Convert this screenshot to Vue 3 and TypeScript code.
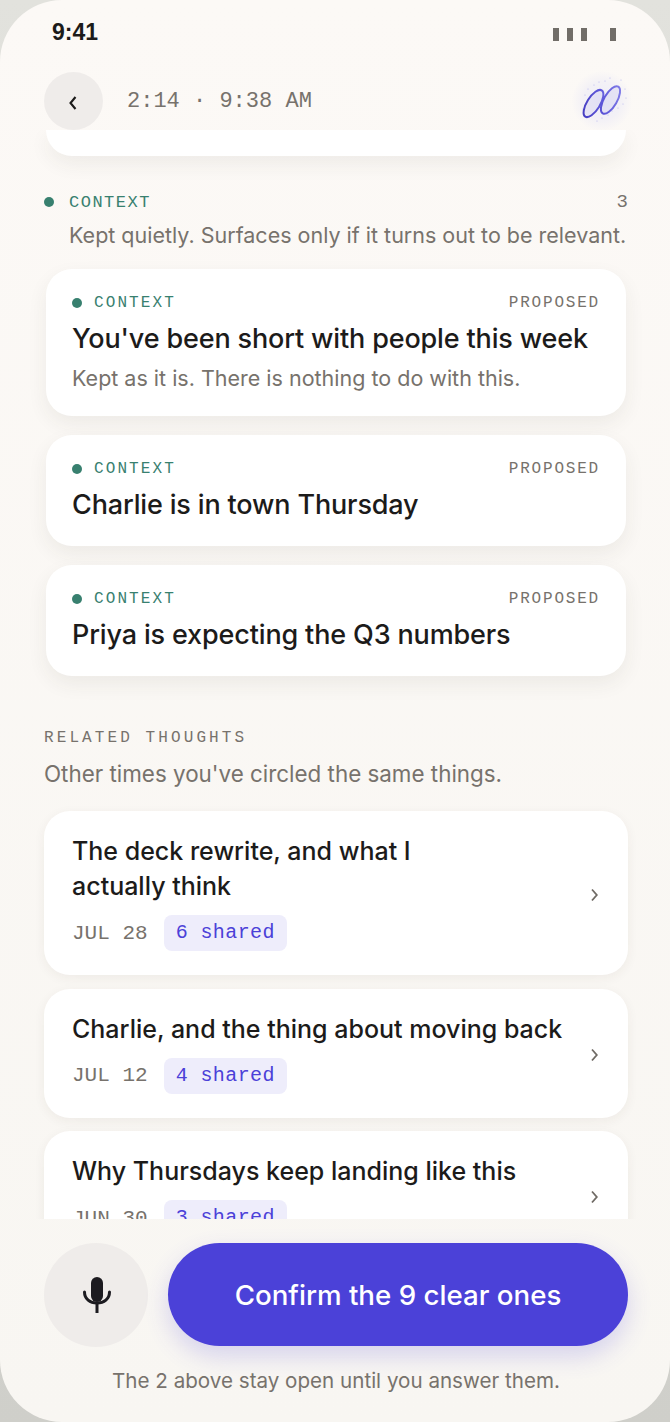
<template>
  <div class="phone">
    <div class="status">
      <span class="clock">9:41</span>
      <span class="signal"><i></i><i></i><i></i><i class="last"></i></span>
    </div>

    <header class="topbar">
      <button class="back" aria-label="Back">
        <svg width="12" height="16" viewBox="0 0 12 16"><path d="M8.500 2 3.500 8l5 6" fill="none" stroke="#1c1b1a" stroke-width="2.100" /></svg>
      </button>
      <span class="when">2:14 · 9:38 AM</span>
      <span class="mark">
        <svg width="60" height="60" viewBox="0 0 60 60">
          <defs>
            <linearGradient id="loop" gradientUnits="userSpaceOnUse" x1="12" y1="46" x2="48" y2="14">
              <stop offset="0" stop-color="#4239bd" />
              <stop offset="0.5" stop-color="#5f58da" />
              <stop offset="1" stop-color="#8985ea" />
            </linearGradient>
          </defs>
          <g fill="#b9b6ee">
            <circle v-for="d in sparkles" :key="d[0] + '-' + d[1]" :cx="d[0]" :cy="d[1]" r="0.6" />
          </g>
          <ellipse cx="21.500" cy="32.500" rx="6.500" ry="15.500" transform="rotate(32 21.500 32.500)" fill="rgba(120,115,230,0.1)" stroke="url(#loop)" stroke-width="2" />
          <ellipse cx="38.500" cy="29" rx="6.500" ry="15.500" transform="rotate(30 38.500 29)" fill="rgba(120,115,230,0.1)" stroke="url(#loop)" stroke-width="2" />
        </svg>
      </span>
    </header>

    <main class="scroller">
      <div class="stub"></div>

      <section class="context">
        <div class="section-head">
          <span class="dot"></span>
          <span class="section-label">CONTEXT</span>
          <span class="count">3</span>
        </div>
        <p class="section-desc">Kept quietly. Surfaces only if it turns out to be relevant.</p>

        <div class="context-list">
          <article v-for="item in contextItems" :key="item.title" class="card">
            <div class="card-head">
              <span class="dot small"></span>
              <span class="card-label">CONTEXT</span>
              <span class="state">PROPOSED</span>
            </div>
            <h3 class="card-title">{{ item.title }}</h3>
            <p v-if="item.note" class="card-note">{{ item.note }}</p>
          </article>
        </div>
      </section>

      <section class="related">
        <h2 class="related-label">RELATED THOUGHTS</h2>
        <p class="related-desc">Other times you've circled the same things.</p>

        <div class="thought-list">
          <article v-for="t in thoughts" :key="t.date" class="thought">
            <div class="thought-body">
              <h3 class="thought-title">{{ t.title }}</h3>
              <div class="thought-meta">
                <span class="date">{{ t.date }}</span>
                <span class="tag">{{ t.shared }} shared</span>
              </div>
            </div>
            <svg class="chev" width="10" height="16" viewBox="0 0 10 16"><path d="M2 2.500 6.800 8 2 13.500" fill="none" stroke="#6f6a64" stroke-width="1.800" /></svg>
          </article>
        </div>
      </section>
    </main>

    <footer class="actions">
      <div class="action-row">
        <button class="mic" aria-label="Record">
          <svg width="32" height="38" viewBox="0 0 32 38">
            <rect x="11" y="1" width="12" height="25" rx="6" fill="#1c1b20" />
            <path d="M4.500 16C4.500 23 10 27 17 27s12.500-4 12.500-11" fill="none" stroke="#1c1b20" stroke-width="3" stroke-linecap="round" />
            <path d="M17 27v10" stroke="#1c1b20" stroke-width="3" />
          </svg>
        </button>
        <button class="confirm">Confirm the 9 clear ones</button>
      </div>
      <p class="hint">The 2 above stay open until you answer them.</p>
    </footer>
  </div>
</template>

<script setup lang="ts">
const contextItems = [
  { title: "You've been short with people this week", note: 'Kept as it is. There is nothing to do with this.' },
  { title: 'Charlie is in town Thursday' },
  { title: 'Priya is expecting the Q3 numbers' },
]

const thoughts = [
  { title: 'The deck rewrite, and what I\nactually think', date: 'JUL 28', shared: 6 },
  { title: 'Charlie, and the thing about moving back', date: 'JUL 12', shared: 4 },
  { title: 'Why Thursdays keep landing like this', date: 'JUN 30', shared: 3 },
]

// little specks round the logo
const sparkles: number[][] = [
  [13, 24], [16, 18], [22, 14], [27, 11], [33, 10], [38, 7], [49, 9], [53, 18],
  [54, 27], [51, 33], [46, 37], [40, 40], [36, 44], [30, 47], [25, 50], [11, 38],
]
</script>

<style>
html, body {
  margin: 0;
  background: linear-gradient(#e2e2dd, #cfcfca);
}
</style>

<style scoped>
.phone {
  width: 670px;
  height: 1422px;
  border-radius: 62px;
  overflow: hidden;
  background: linear-gradient(#fcf9f6, #f8f6f2);
  display: flex;
  flex-direction: column;
  font-family: Inter, "Liberation Sans", sans-serif;
  color: #1c1b1a;
}
.status {
  height: 72px;
  flex: none;
  box-sizing: border-box;
  padding: 18px 52px 0;
  display: flex;
  justify-content: space-between;
  align-items: flex-start;
}
.clock {
  font-family: "Liberation Sans", sans-serif;
  font-weight: 700;
  font-size: 23px;
  line-height: 28px;
}
.signal {
  display: flex;
  gap: 8px;
  margin: 10px 2px 0 0;
}
.signal i {
  width: 6px;
  height: 13px;
  background: #716d68;
}
.signal i.last {
  margin-left: 15px;
}
.topbar {
  height: 58px;
  flex: none;
  padding: 0 38px 0 44px;
  display: flex;
  align-items: center;
}
.back {
  width: 59px;
  height: 58px;
  border: 0;
  padding: 3px 1px 0 0;
  border-radius: 50%;
  background: #efecea;
  display: flex;
  align-items: center;
  justify-content: center;
}
.when {
  margin-left: 24px;
  font-family: "Liberation Mono", monospace;
  font-size: 22px;
  color: #77726c;
}
.mark {
  margin-left: auto;
  width: 60px;
  height: 60px;
  border-radius: 50%;
  background: radial-gradient(circle, #eeedf8 0, #f3f1f6 45%, rgba(251, 248, 245, 0) 72%);
}
.mark svg {
  display: block;
}
.scroller {
  flex: 1;
  min-height: 0;
  overflow: hidden;
}
.stub {
  height: 26px;
  margin: 0 44px 0 46px;
  background: #fff;
  border-radius: 0 0 26px 26px;
  box-shadow: 0 8px 20px rgba(60, 50, 40, 0.07);
}
.context {
  padding: 36px 42px 0 44px;
}
.section-head {
  display: flex;
  align-items: center;
  height: 20px;
}
.dot {
  width: 10px;
  height: 10px;
  border-radius: 50%;
  background: #38806f;
  flex: none;
}
.section-label {
  margin-left: 15px;
  font-family: "Liberation Mono", monospace;
  font-size: 17px;
  letter-spacing: 1.500px;
  color: #38806f;
}
.count {
  margin-left: auto;
  font-family: "Liberation Mono", monospace;
  font-size: 19px;
  color: #77726c;
}
.section-desc {
  margin: 9px 0 0 25px;
  font-size: 21.500px;
  line-height: 28px;
  white-space: nowrap;
  color: #77726c;
}
.context-list {
  margin: 20px 2px 0 2px;
  display: flex;
  flex-direction: column;
  gap: 19px;
}
.card {
  box-sizing: border-box;
  background: #fff;
  border-radius: 26px;
  padding: 24px 26px 21px;
  box-shadow: 0 8px 20px rgba(60, 50, 40, 0.07);
}
.card-head {
  display: flex;
  align-items: center;
  height: 20px;
}
.card-label {
  margin-left: 12px;
  font-family: "Liberation Mono", monospace;
  font-size: 16px;
  letter-spacing: 2.100px;
  color: #38806f;
}
.state {
  margin-left: auto;
  font-family: "Liberation Mono", monospace;
  font-size: 16px;
  letter-spacing: 1.800px;
  color: #77726c;
}
.card-title {
  margin: 6px 0 0;
  font-size: 27px;
  letter-spacing: -0.150px;
  line-height: 40px;
  font-weight: 500;
  white-space: nowrap;
}
.card-note {
  margin: 4px 0 2px;
  font-size: 21.500px;
  line-height: 30px;
  color: #77726c;
}
.related {
  padding: 51px 42px 0 44px;
}
.related-label {
  margin: 0;
  font-family: "Liberation Mono", monospace;
  font-weight: 400;
  font-size: 16px;
  line-height: 22px;
  letter-spacing: 3.100px;
  color: #77726c;
}
.related-desc {
  margin: 11px 0 0;
  font-size: 22.400px;
  line-height: 28px;
  color: #77726c;
}
.thought-list {
  margin-top: 23px;
  display: flex;
  flex-direction: column;
  gap: 13.500px;
}
.thought {
  background: #fff;
  border-radius: 26px;
  padding: 23px 28px 24px;
  display: flex;
  align-items: center;
  justify-content: space-between;
  box-shadow: 0 3px 12px rgba(60, 50, 40, 0.06);
}
.thought-body {
  width: 500px;
}
.thought-title {
  margin: 0;
  font-size: 25px;
  line-height: 35px;
  font-weight: 500;
  white-space: pre-line;
}
.thought-meta {
  margin-top: 11px;
  display: flex;
  align-items: center;
  gap: 16px;
}
.date {
  font-family: "Liberation Mono", monospace;
  font-size: 21px;
  color: #77726c;
}
.tag {
  height: 36px;
  padding: 0 12px;
  border-radius: 8px;
  background: #eeedfb;
  font-family: "Liberation Mono", monospace;
  font-size: 20px;
  letter-spacing: 0.400px;
  line-height: 36px;
  color: #4b41d8;
}
.chev {
  flex: none;
  margin-top: 4px;
}
.actions {
  flex: none;
  height: 203px;
  box-sizing: border-box;
  padding: 24px 42px 0 44px;
}
.action-row {
  display: flex;
  gap: 20px;
}
.mic {
  width: 104px;
  height: 104px;
  flex: none;
  border: 0;
  padding: 0;
  border-radius: 50%;
  background: #efecea;
  display: flex;
  align-items: center;
  justify-content: center;
}
.confirm {
  flex: 1;
  height: 103px;
  border: 0;
  border-radius: 52px;
  background: #4b41d8;
  color: #fff;
  font-family: inherit;
  font-size: 27.700px;
  font-weight: 500;
  box-shadow: 0 10px 24px rgba(75, 65, 216, 0.2);
}
.hint {
  margin: 20px 0 0;
  text-align: center;
  font-size: 20.600px;
  line-height: 28px;
  color: #77726c;
}
</style>
